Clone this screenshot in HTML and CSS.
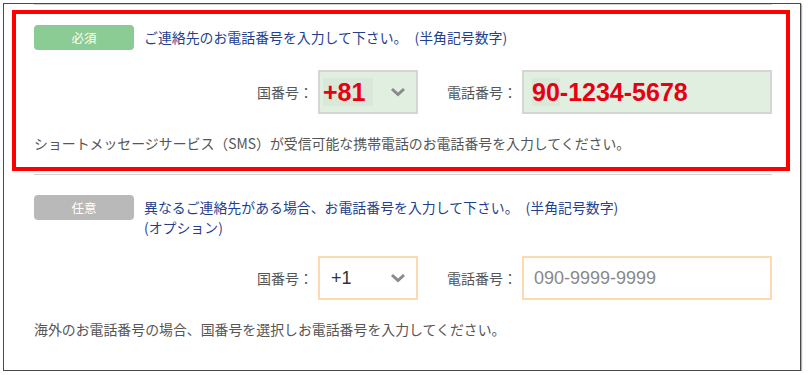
FILE: index.html
```html
<!DOCTYPE html>
<html lang="ja">
<head>
<meta charset="utf-8">
<title>電話番号</title>
<link rel="stylesheet" href="styles.css">
</head>
<body>
<div class="frame">
  <div class="sep"></div>
  <section class="sec sec-req">
    <div class="head">
      <span class="badge badge-req">必須</span>
      <p class="title">ご連絡先のお電話番号を入力して下さい。　(半角記号数字)</p>
    </div>
    <div class="row">
      <span class="label">国番号：</span>
      <div class="select select-filled">
        <span class="val-big"><span class="hl">+81</span></span>
        <svg class="chev" width="16" height="10" viewBox="0 0 16 10"><polyline points="2,2 8,7.5 14,2" fill="none" stroke="#8a8a8a" stroke-width="3"/></svg>
      </div>
      <span class="label">電話番号：</span>
      <div class="input input-filled"><span class="val-big"><span class="hl">90</span>-1234-5678</span></div>
    </div>
    <p class="note">ショートメッセージサービス（SMS）が受信可能な携帯電話のお電話番号を入力してください。</p>
  </section>
  <div class="sep sep2"></div>
  <section class="sec sec-opt">
    <div class="head">
      <span class="badge badge-opt">任意</span>
      <p class="title">異なるご連絡先がある場合、お電話番号を入力して下さい。　(半角記号数字)<br>(オプション)</p>
    </div>
    <div class="row">
      <span class="label">国番号：</span>
      <div class="select select-empty">
        <span class="val">+1</span>
        <svg class="chev" width="16" height="10" viewBox="0 0 16 10"><polyline points="2,2 8,7.5 14,2" fill="none" stroke="#8a8a8a" stroke-width="3"/></svg>
      </div>
      <span class="label">電話番号：</span>
      <div class="input input-empty"><span class="ph">090-9999-9999</span></div>
    </div>
    <p class="note">海外のお電話番号の場合、国番号を選択しお電話番号を入力してください。</p>
  </section>
</div>
</body>
</html>
```

FILE: styles.css
```css
html, body {
  margin: 0;
  padding: 0;
  background: #ffffff;
}
body {
  font-family: "Noto Sans CJK JP", "Noto Sans", sans-serif;
  font-size: 14px;
  color: #555555;
}
.frame {
  margin: 3px 0 0 3px;
  width: 796px;
  height: 366px;
  border: 1px solid #4a4a4a;
  box-shadow: 1px 1px 1px #b0b0b0;
  overflow: hidden;
}
.sep {
  height: 1px;
  background: #d4d4d4;
  margin: 0 28px 0 30px;
}
.sep2 {
  margin-top: 3px;
}
.sec {
  margin: 5px 10px 0 8px;
  border: 4px solid transparent;
  padding: 11px 14px 0 18px;
}
.sec-req {
  border-color: #ff0000;
  height: 142px;
}
.head {
  display: flex;
  align-items: flex-start;
}
.badge {
  flex: none;
  width: 100px;
  height: 25px;
  border-radius: 4px;
  color: #ffffff;
  font-size: 12.5px;
  line-height: 25px;
  text-align: center;
  margin-right: 10px;
}
.badge-req {
  background: #8bcb94;
}
.badge-opt {
  background: #b9b9b9;
}
.title {
  margin: 0;
  padding-top: 2px;
  line-height: 20px;
  color: #1f3f8f;
  font-size: 13.9px;
}
.row {
  display: flex;
  justify-content: flex-end;
  align-items: center;
  margin-top: 20px;
  height: 44px;
}
.sec-opt .row {
  margin-top: 19px;
}
.label {
  margin-right: 5px;
  font-size: 14px;
  color: #555555;
}
.select {
  box-sizing: border-box;
  width: 100px;
  height: 44px;
  display: flex;
  align-items: center;
  justify-content: space-between;
  margin-right: 29px;
  padding-right: 10px;
}
.input {
  box-sizing: border-box;
  width: 250px;
  height: 44px;
  display: flex;
  align-items: center;
}
.select-filled, .input-filled {
  background: #e1efe0;
  border: 2px solid #d5d5d5;
}
.select-empty, .input-empty {
  background: #ffffff;
  border: 2px solid #fdd9b1;
}
.select-filled {
  padding-left: 3px;
}
.input-filled {
  padding-left: 8px;
}
.select-empty {
  padding-left: 11px;
}
.input-empty {
  padding-left: 10px;
}
.val-big {
  font-family: "Liberation Sans", Arial, sans-serif;
  font-weight: bold;
  font-size: 25px;
  color: #e60012;
  line-height: 26px;
}
.hl {
  background: #d9e8d8;
}
.select-filled .hl {
  padding-right: 8px;
}
.val {
  font-family: "Liberation Sans", Arial, sans-serif;
  font-size: 18px;
  color: #333333;
}
.ph {
  font-family: "Liberation Sans", Arial, sans-serif;
  font-size: 18px;
  color: #888888;
}
.chev {
  display: block;
  flex: none;
}
.note {
  margin: 19px 0 0 0;
  line-height: 20px;
  font-size: 13.9px;
  color: #555555;
}
```
